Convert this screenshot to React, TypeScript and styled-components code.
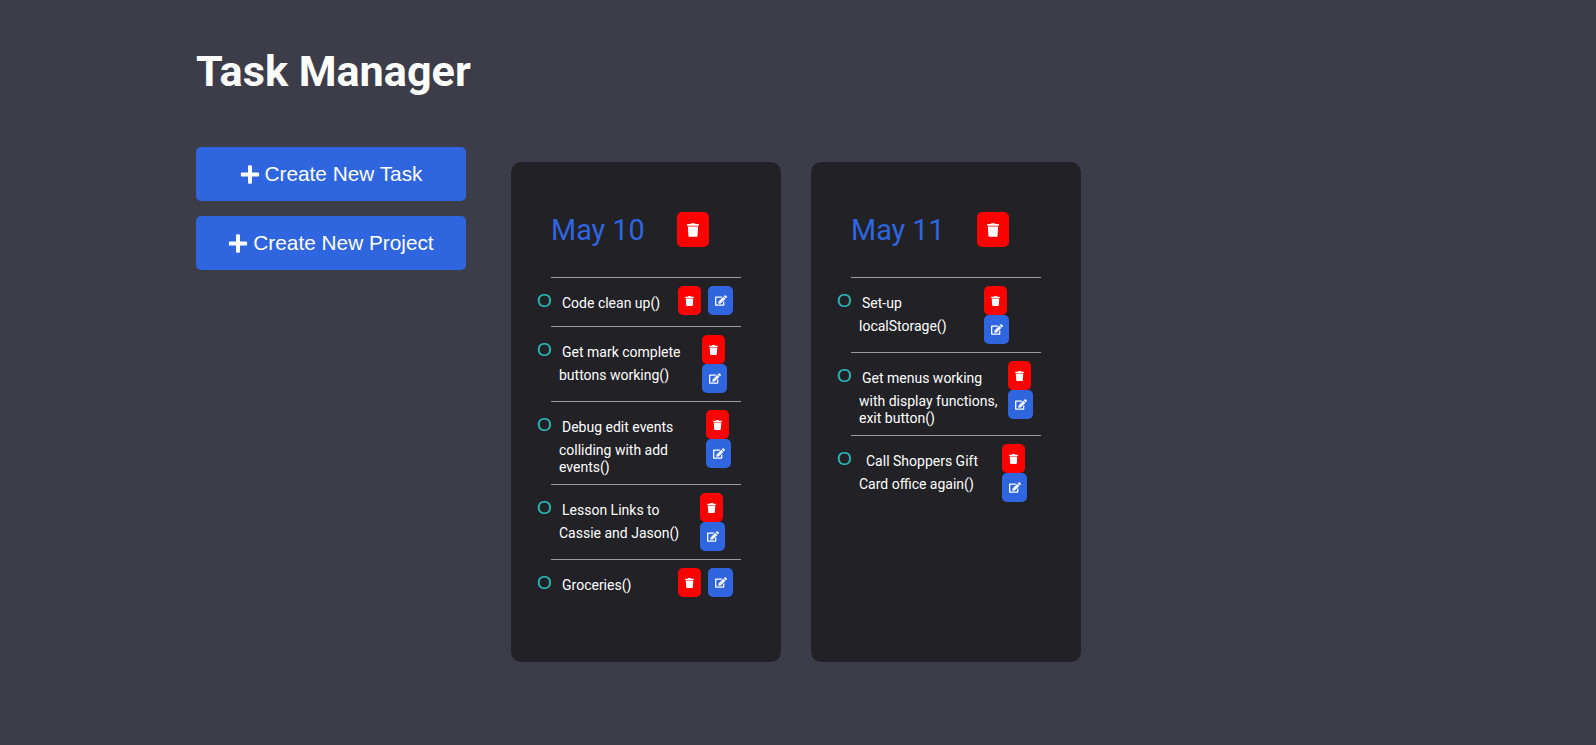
import React from "react";
import styled, { createGlobalStyle } from "styled-components";
import { FaEdit, FaPlus, FaTrash } from "react-icons/fa";

const GlobalStyle = createGlobalStyle`
  html, body {
    margin: 0;
    background: #3d3d49;
    font-family: Roboto, "Liberation Sans", sans-serif;
  }
`;

const Page = styled.div`
  min-height: 745px;
  box-sizing: border-box;
  padding: 40px 0 0 196px;
`;

const Title = styled.h1`
  margin: 0 0 43px;
  color: #fff;
  font-size: 43.2px;
  line-height: 64px;
  font-weight: 700;
`;

const Main = styled.main`
  display: flex;
  align-items: flex-start;
  gap: 45px;
`;

const Sidebar = styled.aside`
  display: flex;
  flex-direction: column;
  gap: 15px;
  width: 270px;
`;

const CreateButton = styled.button`
  display: flex;
  align-items: center;
  justify-content: center;
  gap: 5px;
  height: 54px;
  padding: 0;
  border: 0;
  border-radius: 5px;
  background: #2f66e0;
  color: #fff;
  font-family: "Liberation Sans", Arial, sans-serif;
  font-size: 20.8px;

  svg {
    width: 20px;
    height: 21px;
  }
`;

const Board = styled.div`
  display: flex;
  gap: 30px;
  margin-top: 15px;
`;

const Card = styled.section`
  width: 270px;
  height: 500px;
  box-sizing: border-box;
  padding-top: 50px;
  border-radius: 10px;
  background: #212126;
`;

const CardHeader = styled.header`
  display: flex;
  align-items: center;
  height: 35px;
  margin-bottom: 30px;
  padding-left: 40px;
`;

const DateLabel = styled.h2`
  width: 126px;
  margin: 1px 0 0;
  color: #2f66e0;
  font-size: 28.8px;
  font-weight: 400;
`;

const IconButton = styled.button<{ $tone: "red" | "blue"; $wide?: boolean }>`
  display: flex;
  align-items: center;
  justify-content: center;
  width: ${(p) => (p.$wide ? 25 : 23)}px;
  height: 29px;
  padding: 0;
  border: 0;
  border-radius: 5px;
  background: ${(p) => (p.$tone === "red" ? "#ff0000" : "#2f66e0")};
  color: #fff;

  svg {
    width: ${(p) => (p.$wide ? 12 : 11)}px;
    height: ${(p) => (p.$wide ? 11 : 10)}px;
  }
`;

const HeaderDelete = styled(IconButton)`
  width: 32px;
  height: 35px;

  svg {
    width: 12px;
    height: 14px;
  }
`;

const Divider = styled.hr`
  width: 190px;
  height: 1px;
  margin: 0 0 0 40px;
  border: 0;
  background: #9a9aa0;
`;

const Row = styled.div`
  display: flex;
  align-items: flex-start;
  padding: 8px 0 8px 27px;
`;

const TaskText = styled.div<{ $width: number }>`
  flex: none;
  width: ${(p) => p.$width}px;
  color: #fff;
  font-size: 14px;
  line-height: 17px;
`;

const FirstLine = styled.div<{ $indent: number }>`
  display: flex;
  align-items: flex-start;
  height: 32px;
  white-space: nowrap;

  span {
    margin: 9px 0 0 ${(p) => p.$indent}px;
  }
`;

const Circle = styled.i`
  flex: none;
  width: 15px;
  margin: 5px 0 0 -1px;
  color: #2bb8b8;
  font-family: "Liberation Sans", Arial, sans-serif;
  font-style: normal;
  font-size: 19.2px;
  line-height: 19px;
`;

const MoreLines = styled.div`
  padding-left: 21px;
`;

const Actions = styled.div<{ $stacked: boolean }>`
  display: flex;
  flex-direction: ${(p) => (p.$stacked ? "column" : "row")};
  gap: ${(p) => (p.$stacked ? 0 : 7)}px;
`;

type Task = { lines: string[]; width: number; indent?: number };

const columns: { date: string; tasks: Task[] }[] = [
  {
    date: "May 10",
    tasks: [
      { lines: ["Code clean up()"], width: 140 },
      { lines: ["Get mark complete", "buttons working()"], width: 164 },
      { lines: ["Debug edit events", "colliding with add", "events()"], width: 168 },
      { lines: ["Lesson Links to", "Cassie and Jason()"], width: 162 },
      { lines: ["Groceries()"], width: 140 },
    ],
  },
  {
    date: "May 11",
    tasks: [
      { lines: ["Set-up", "localStorage()"], width: 146 },
      { lines: ["Get menus working", "with display functions,", "exit button()"], width: 170 },
      { lines: ["Call Shoppers Gift", "Card office again()"], width: 164, indent: 14 },
    ],
  },
];

const TaskRow = ({ task }: { task: Task }) => {
  const [first, ...rest] = task.lines;
  return (
    <Row>
      <TaskText $width={task.width}>
        <FirstLine $indent={task.indent ?? 10}>
          <Circle>O</Circle>
          <span>{first}</span>
        </FirstLine>
        {rest.length > 0 && (
          <MoreLines>
            {rest.map((line) => (
              <div key={line}>{line}</div>
            ))}
          </MoreLines>
        )}
      </TaskText>
      <Actions $stacked={rest.length > 0}>
        <IconButton $tone="red">
          <FaTrash />
        </IconButton>
        <IconButton $tone="blue" $wide>
          <FaEdit />
        </IconButton>
      </Actions>
    </Row>
  );
};

export default function App() {
  return (
    <Page>
      <GlobalStyle />
      <Title>Task Manager</Title>
      <Main>
        <Sidebar>
          <CreateButton>
            <FaPlus />
            Create New Task
          </CreateButton>
          <CreateButton>
            <FaPlus />
            Create New Project
          </CreateButton>
        </Sidebar>
        <Board>
          {columns.map((column) => (
            <Card key={column.date}>
              <CardHeader>
                <DateLabel>{column.date}</DateLabel>
                <HeaderDelete $tone="red">
                  <FaTrash />
                </HeaderDelete>
              </CardHeader>
              {column.tasks.map((task) => (
                <React.Fragment key={task.lines[0]}>
                  <Divider />
                  <TaskRow task={task} />
                </React.Fragment>
              ))}
            </Card>
          ))}
        </Board>
      </Main>
    </Page>
  );
}
